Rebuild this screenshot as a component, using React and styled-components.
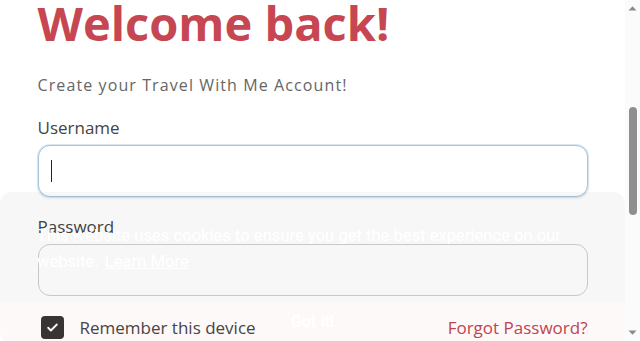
import React, { useLayoutEffect } from "react";
import styled, { createGlobalStyle } from "styled-components";

const GlobalStyle = createGlobalStyle`
  html, body {
    margin: 0;
    padding: 0;
    background: #ffffff;
  }
  body {
    font-family: "Open Sans", "Noto Sans", sans-serif;
    color: #444;
  }
  * { box-sizing: border-box; }
`;

const Page = styled.div`
  display: flex;
  flex-direction: column;
  padding-right: 15px;
`;

const Nav = styled.nav`
  height: 72px;
  display: flex;
  align-items: center;
  justify-content: space-between;
  padding: 0 37px;
  border-bottom: 1px solid #eee;
`;

const Logo = styled.div`
  font-weight: 700;
  font-size: 20px;
  color: #c64752;
`;

const NavLinks = styled.div`
  display: flex;
  gap: 20px;
  font-size: 15px;
  color: #555;
`;

const FormWrap = styled.main`
  width: 100%;
  max-width: 550px;
  margin: 0 auto;
  padding: 212px 0 0;
  display: flex;
  flex-direction: column;
`;

const Title = styled.h1`
  margin: 0;
  font-size: 47px;
  line-height: 58px;
  font-weight: 700;
  color: #c64752;
`;

const Subtitle = styled.p`
  margin: 21px 0 0;
  font-size: 16px;
  line-height: 24px;
  letter-spacing: 1.1px;
  color: #666;
`;

const Field = styled.div`
  display: flex;
  flex-direction: column;
  gap: 5px;
  margin-top: ${({ $top }) => $top}px;
`;

const Label = styled.label`
  font-size: 17px;
  line-height: 24px;
  font-weight: 500;
  color: #444;
`;

const InputBox = styled.div`
  position: relative;
`;

const Input = styled.input`
  width: 100%;
  height: 52px;
  border-radius: 12px;
  padding: 0 14px;
  font-size: 16px;
  font-family: inherit;
  outline: none;
  background: #fff;
  border: 1px solid ${({ $focused }) => ($focused ? "#a6c4da" : "#cfcfcf")};
  box-shadow: ${({ $focused }) =>
    $focused ? "0 0 0 1px #d7e6f1, 0 1px 3px rgba(60, 90, 120, 0.18)" : "none"};
`;

const Caret = styled.span`
  position: absolute;
  left: 13px;
  top: 15px;
  width: 1px;
  height: 22px;
  background: #222;
`;

const Options = styled.div`
  margin-top: 19px;
  height: 24px;
  display: flex;
  align-items: center;
  justify-content: space-between;
`;

const Remember = styled.label`
  display: flex;
  align-items: center;
  gap: 16px;
  padding-left: 3px;
  font-size: 17px;
  color: #444;
`;

const Check = styled.span`
  width: 23px;
  height: 23px;
  border-radius: 4px;
  background: #333;
  display: flex;
  align-items: center;
  justify-content: center;
`;

const Forgot = styled.a`
  font-size: 17px;
  color: #c0444f;
  text-decoration: none;
`;

const LoginButton = styled.button`
  margin-top: 28px;
  height: 52px;
  border: none;
  border-radius: 12px;
  background: #c64752;
  color: #fff;
  font-size: 17px;
  font-weight: 600;
  font-family: inherit;
`;

const SignUp = styled.p`
  margin: 24px 0 0;
  text-align: center;
  font-size: 15px;
  color: #666;

  a {
    color: #c64752;
    font-weight: 600;
    text-decoration: none;
  }
`;

const Footer = styled.footer`
  margin-top: 96px;
  height: 120px;
  display: flex;
  align-items: center;
  justify-content: center;
  font-size: 13px;
  color: #999;
  border-top: 1px solid #eee;
`;

const CookieBar = styled.div`
  position: fixed;
  left: 0;
  right: 15px;
  bottom: 0;
  height: 149px;
  display: flex;
  flex-direction: column;
  color: #ffffff;
  font-family: Roboto, "Liberation Sans", sans-serif;
`;

const CookieMessage = styled.div`
  flex: 1;
  border-radius: 12px 12px 0 0;
  background: rgba(0, 0, 0, 0.03);
  padding: 31px 37px 0;
`;

const CookieText = styled.p`
  margin: 0;
  font-size: 16.6px;
  line-height: 26px;
  max-width: 545px;

  a {
    color: #ffffff;
    margin-left: 6px;
    text-decoration: underline;
  }
`;

const CookieButton = styled.button`
  height: 39px;
  border: none;
  border-radius: 0 0 0 8px;
  background: rgba(200, 72, 82, 0.035);
  color: #ffffff;
  font-family: Roboto, "Liberation Sans", sans-serif;
  font-size: 16px;
  font-weight: 700;
`;

const ScrollTrack = styled.div`
  position: fixed;
  top: 0;
  right: 0;
  bottom: 0;
  width: 15px;
  background: #fbfbfb;
  display: flex;
  flex-direction: column;
  align-items: center;
  justify-content: space-between;
  padding: 5px 0;
`;

const ScrollThumb = styled.div`
  position: absolute;
  left: 4px;
  top: 107px;
  width: 8px;
  height: 108px;
  border-radius: 4px;
  background: #8f8f8f;
`;

function Arrow({ up }) {
  return (
    <svg width="9" height="6" viewBox="0 0 9 6">
      <path d={up ? "M0.5 5.5L4.5 1.2L8.5 5.5Z" : "M0.5 0.5L4.5 4.8L8.5 0.5Z"} fill="#8a8a8a" />
    </svg>
  );
}

function CheckIcon() {
  return (
    <svg width="13" height="13" viewBox="0 0 24 24" fill="none">
      <path
        d="M4 12.5l5 5L20 6.5"
        stroke="#fff"
        strokeWidth="3.4"
        strokeLinecap="round"
        strokeLinejoin="round"
      />
    </svg>
  );
}

export default function App() {
  useLayoutEffect(() => {
    window.scrollTo(0, 290);
  }, []);

  return (
    <Page>
      <GlobalStyle />
      <Nav>
        <Logo>Travel With Me</Logo>
        <NavLinks>
          <span>Home</span>
          <span>Tours</span>
          <span>Contact</span>
        </NavLinks>
      </Nav>
      <FormWrap>
        <Title>Welcome back!</Title>
        <Subtitle>Create your Travel With Me Account!</Subtitle>
        <Field $top={19}>
          <Label>Username</Label>
          <InputBox>
            <Input $focused type="text" />
            <Caret />
          </InputBox>
        </Field>
        <Field $top={18}>
          <Label>Password</Label>
          <InputBox>
            <Input type="password" />
          </InputBox>
        </Field>
        <Options>
          <Remember>
            <Check>
              <CheckIcon />
            </Check>
            Remember this device
          </Remember>
          <Forgot href="#">Forgot Password?</Forgot>
        </Options>
        <LoginButton>Log In</LoginButton>
        <SignUp>
          Don't have an account? <a href="#">Sign Up</a>
        </SignUp>
      </FormWrap>
      <Footer>© Travel With Me</Footer>
      <CookieBar>
        <CookieMessage>
          <CookieText>
            This website uses cookies to ensure you get the best experience on
            our website.<a href="#">Learn More</a>
          </CookieText>
        </CookieMessage>
        <CookieButton>Got it!</CookieButton>
      </CookieBar>
      <ScrollTrack>
        <Arrow up />
        <ScrollThumb />
        <Arrow />
      </ScrollTrack>
    </Page>
  );
}
